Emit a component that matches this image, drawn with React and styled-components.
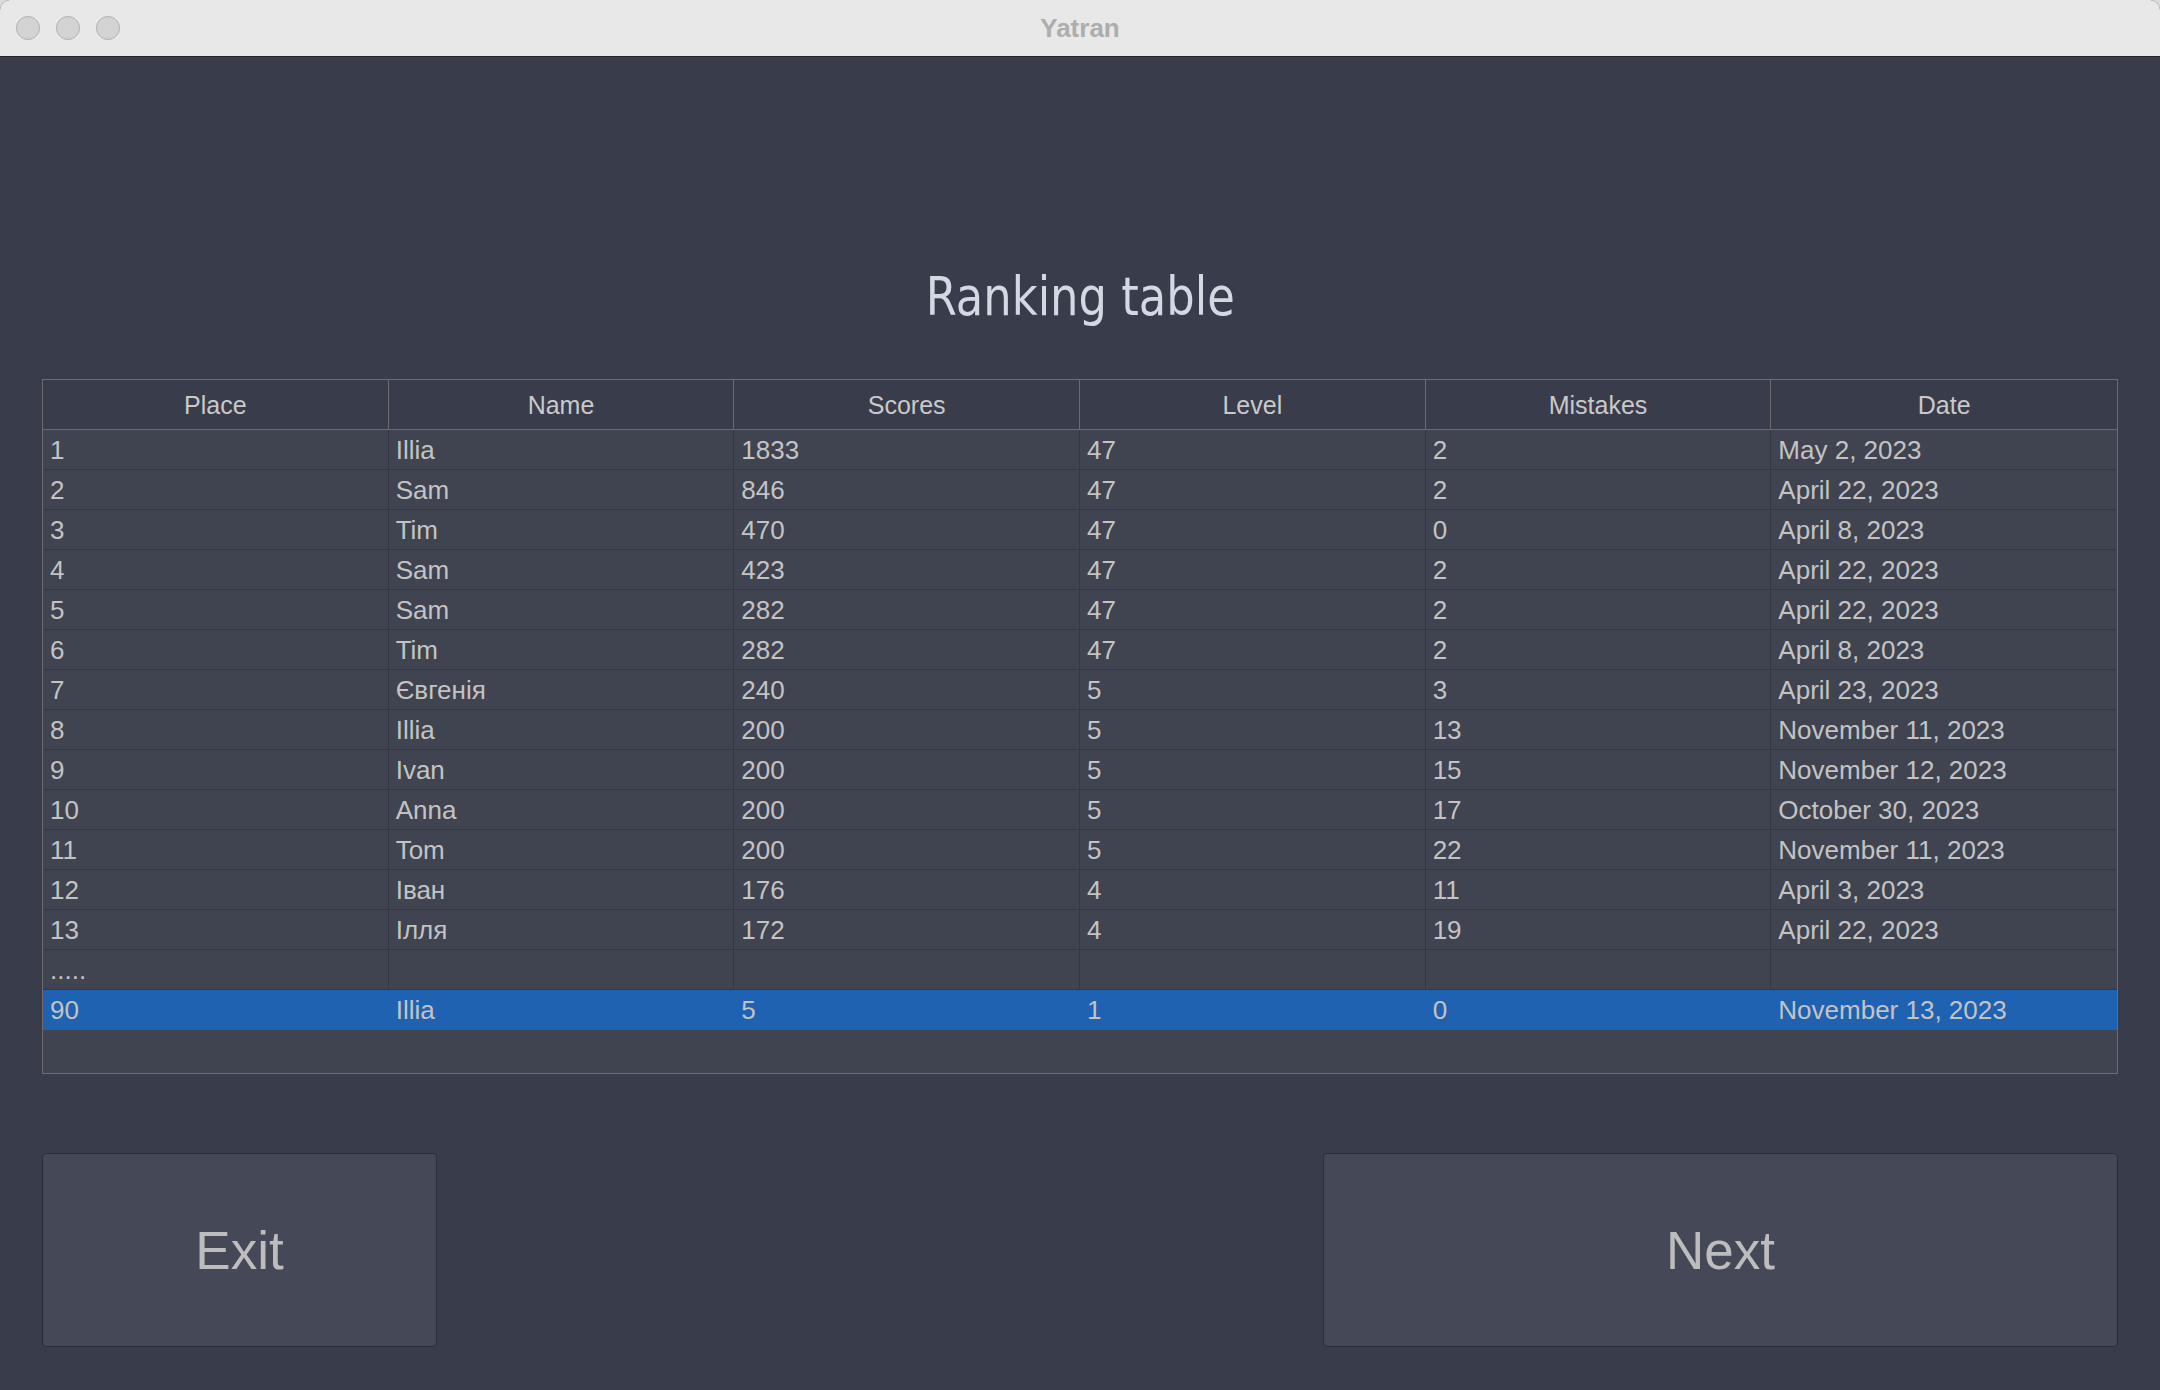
import React from "react";
import styled, { createGlobalStyle } from "styled-components";

const GlobalStyle = createGlobalStyle`
  html, body {
    margin: 0;
    padding: 0;
    background: #dcdad4;
  }
  #root {
    width: 2160px;
    height: 1390px;
  }
`;

const Window = styled.div`
  width: 2160px;
  height: 1390px;
  display: flex;
  flex-direction: column;
  background: #393c4b;
  border-radius: 10px 10px 0 0;
  overflow: hidden;
`;

const TitleBar = styled.div`
  box-sizing: border-box;
  height: 57px;
  flex-shrink: 0;
  background: #e8e8e8;
  border-bottom: 1px solid #25262d;
  display: grid;
  grid-template-columns: 1fr auto 1fr;
  align-items: center;
`;

const Lights = styled.div`
  display: flex;
  gap: 16px;
  padding-left: 16px;
`;

const Light = styled.span`
  box-sizing: border-box;
  width: 24px;
  height: 24px;
  border-radius: 50%;
  background: #d4d4d4;
  border: 1px solid #b1b1b1;
`;

const WindowTitle = styled.div`
  font-family: "Liberation Sans", Arial, sans-serif;
  font-weight: bold;
  font-size: 26px;
  color: #adadad;
`;

const Content = styled.main`
  flex: 1;
  display: flex;
  flex-direction: column;
  padding: 0 42px 43px 42px;
`;

const Heading = styled.h1`
  margin: 213px 0 0 0;
  height: 54px;
  text-align: center;
  font-family: "DejaVu Sans", Verdana, sans-serif;
  font-weight: normal;
  font-size: 54px;
  line-height: 54px;
  color: #d4d8e3;

  span {
    display: inline-block;
    transform: scaleX(0.83);
  }
`;

const Table = styled.div`
  box-sizing: border-box;
  margin-top: 55px;
  height: 695px;
  border: 1px solid #6c6c6c;
  background: #404450;
  display: flex;
  flex-direction: column;
  font-family: "Liberation Sans", Arial, sans-serif;
`;

const HeaderRow = styled.div`
  box-sizing: border-box;
  height: 50px;
  display: grid;
  grid-template-columns: repeat(6, 1fr);
  background: #393c4b;
  border-bottom: 1px solid #6c6c6c;
`;

const HeaderCell = styled.div`
  display: flex;
  align-items: center;
  justify-content: center;
  padding-top: 2px;
  font-size: 25px;
  color: #c9c9c9;
  border-right: 1px solid #6c6c6c;
  &:last-child {
    border-right: none;
  }
`;

const Row = styled.div`
  box-sizing: border-box;
  height: 40px;
  display: grid;
  grid-template-columns: repeat(6, 1fr);
  grid-template-rows: 100%;
  background: ${({ $selected }) => ($selected ? "#1f62b2" : "#404450")};
  border-bottom: ${({ $selected }) =>
    $selected ? "none" : "1px solid #343744"};
`;

const Cell = styled.div`
  box-sizing: border-box;
  padding: 2px 0 0 7px;
  font-size: 26px;
  line-height: 37px;
  white-space: nowrap;
  color: #c3c3c3;
  border-right: 1px solid
    ${({ $selected }) => ($selected ? "#1f62b2" : "#343744")};
  &:last-child {
    border-right: none;
  }
`;

const Filler = styled.div`
  flex: 1;
`;

const Buttons = styled.div`
  margin-top: 79px;
  display: flex;
  justify-content: space-between;
`;

const Button = styled.button`
  box-sizing: border-box;
  width: ${({ $wide }) => ($wide ? "795px" : "395px")};
  height: 194px;
  background: #454957;
  border: 1px solid #2a2c36;
  border-radius: 4px;
  font-family: "Liberation Sans", Arial, sans-serif;
  font-size: 53px;
  color: #bdbdbd;
  padding: 0;
  cursor: pointer;
`;

const columns = ["Place", "Name", "Scores", "Level", "Mistakes", "Date"];

const rows = [
  [1, "Illia", 1833, 47, 2, "May 2, 2023"],
  [2, "Sam", 846, 47, 2, "April 22, 2023"],
  [3, "Tim", 470, 47, 0, "April 8, 2023"],
  [4, "Sam", 423, 47, 2, "April 22, 2023"],
  [5, "Sam", 282, 47, 2, "April 22, 2023"],
  [6, "Tim", 282, 47, 2, "April 8, 2023"],
  [7, "Євгенія", 240, 5, 3, "April 23, 2023"],
  [8, "Illia", 200, 5, 13, "November 11, 2023"],
  [9, "Ivan", 200, 5, 15, "November 12, 2023"],
  [10, "Anna", 200, 5, 17, "October 30, 2023"],
  [11, "Tom", 200, 5, 22, "November 11, 2023"],
  [12, "Іван", 176, 4, 11, "April 3, 2023"],
  [13, "Ілля", 172, 4, 19, "April 22, 2023"],
  [".....", "", "", "", "", ""],
];

const current = [90, "Illia", 5, 1, 0, "November 13, 2023"];

const App = () => {
  return (
    <>
      <GlobalStyle />
      <Window>
        <TitleBar>
          <Lights>
            <Light />
            <Light />
            <Light />
          </Lights>
          <WindowTitle>Yatran</WindowTitle>
          <div />
        </TitleBar>

        <Content>
          <Heading>
            <span>Ranking table</span>
          </Heading>

          <Table>
            <HeaderRow>
              {columns.map((c) => (
                <HeaderCell key={c}>{c}</HeaderCell>
              ))}
            </HeaderRow>
            {rows.map((r, i) => (
              <Row key={i}>
                {r.map((v, j) => (
                  <Cell key={j}>{v}</Cell>
                ))}
              </Row>
            ))}
            <Row $selected>
              {current.map((v, j) => (
                <Cell key={j} $selected>
                  {v}
                </Cell>
              ))}
            </Row>
            <Filler />
          </Table>

          <Buttons>
            <Button>Exit</Button>
            <Button $wide>Next</Button>
          </Buttons>
        </Content>
      </Window>
    </>
  );
};

export default App;
